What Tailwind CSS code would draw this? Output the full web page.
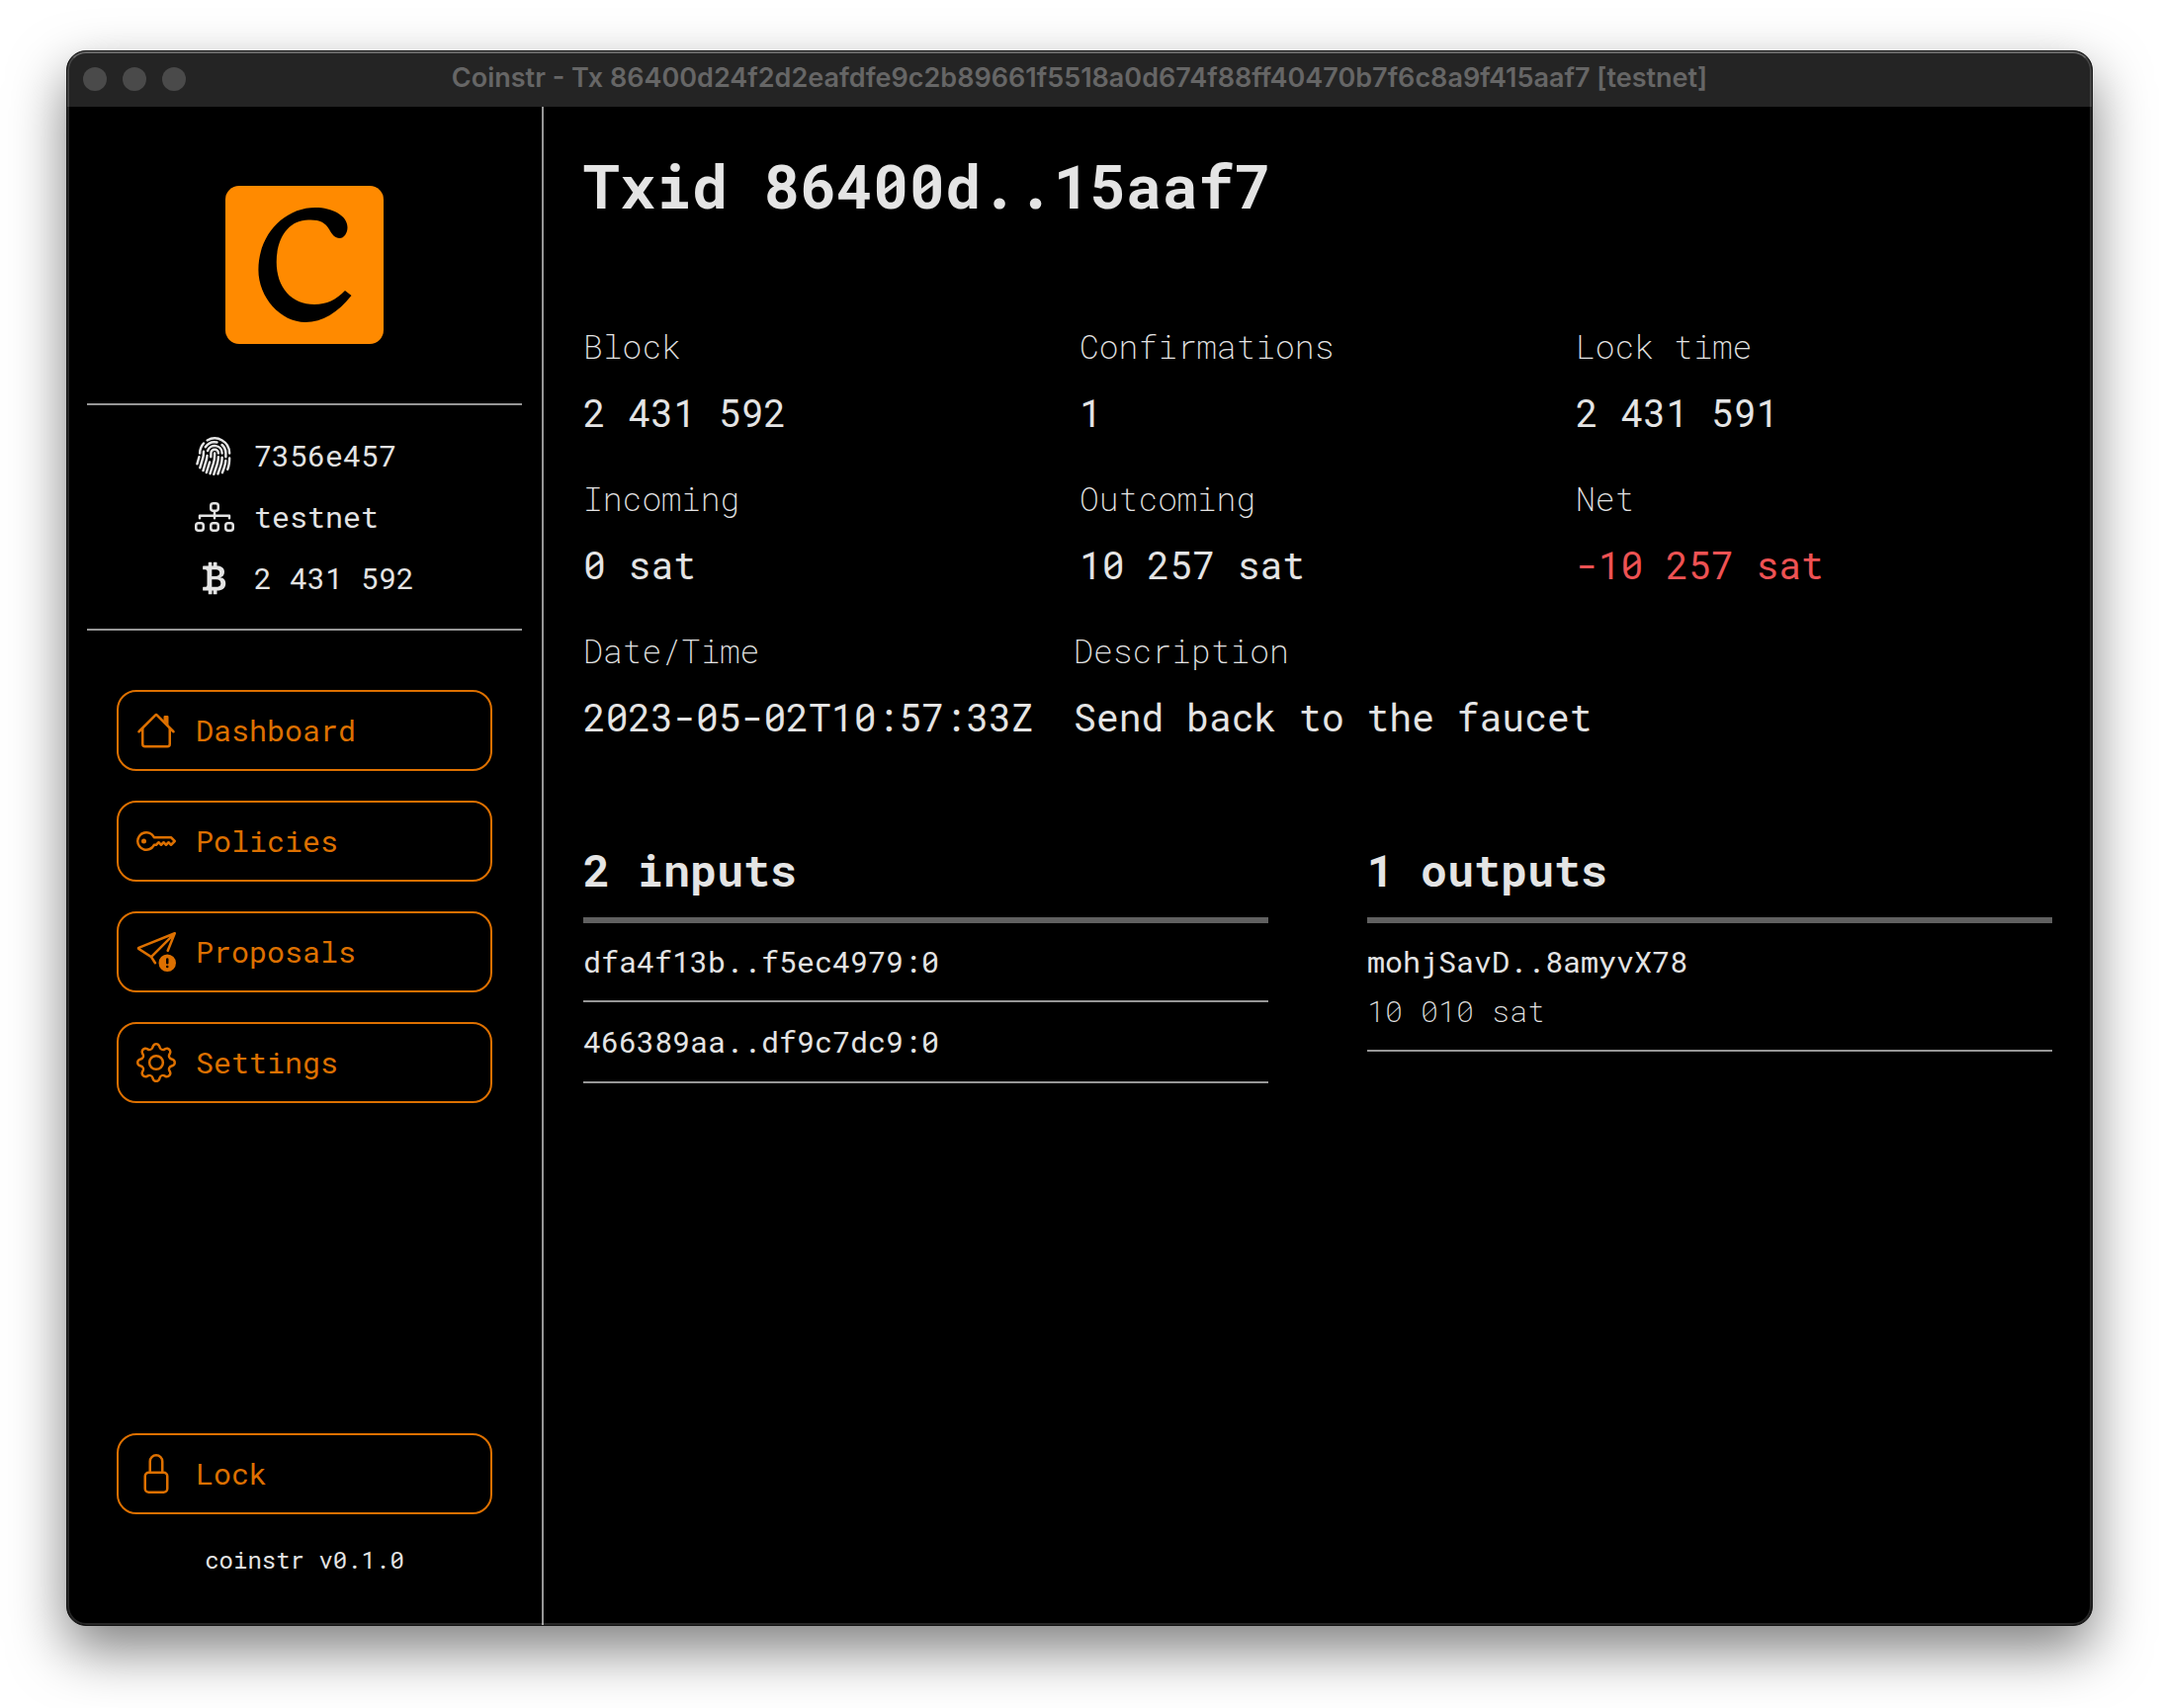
<!DOCTYPE html>
<html lang="en">
<head>
<meta charset="utf-8">
<meta name="viewport" content="width=device-width, initial-scale=1">
<title>Coinstr</title>
<script src="https://cdn.jsdelivr.net/npm/@tailwindcss/browser@4"></script>
</head>
<body class="flex min-h-screen flex-col bg-white px-[67px] pt-[51px] pb-[83px] font-['Roboto_Mono','DejaVu_Sans_Mono',monospace] text-[#e4e4e4]">
<div class="relative flex flex-1 flex-col overflow-hidden rounded-[20px] border border-[#111] bg-black shadow-[0_24px_56px_rgba(0,0,0,0.5)]">
  <div class="pointer-events-none absolute inset-0 z-10 rounded-[19px] border-2 border-white/15 border-t-white/30"></div>

  <header class="relative flex h-14 items-center justify-center bg-[#242424]">
    <div class="absolute left-4 flex gap-4">
      <span class="size-6 rounded-full bg-[#4a4a4a]"></span>
      <span class="size-6 rounded-full bg-[#4a4a4a]"></span>
      <span class="size-6 rounded-full bg-[#4a4a4a]"></span>
    </div>
    <p class="pb-0.5 font-['Inter',sans-serif] text-[27px] leading-8 font-semibold whitespace-nowrap text-[#666666]">Coinstr - Tx 86400d24f2d2eafdfe9c2b89661f5518a0d674f88ff40470b7f6c8a9f415aaf7 [testnet]</p>
  </header>

  <div class="flex flex-1">
    <aside class="flex w-[482px] shrink-0 flex-col border-r-2 border-[#969696] px-5 pt-20">
      <svg class="size-40 self-center" viewBox="0 0 160 160" role="img" aria-label="Coinstr">
        <rect width="160" height="160" rx="14" fill="#ff8a00"/>
        <path fill="#000" d="M91 22C108 22 123.500 30 123.500 42C123.500 48 120 53 115.500 53C111 53 107.500 49 105 44C101 37 95 34 84 34.500C64 34.500 51.700 53 51.700 77C51.700 103 67 120 90 120C103 120 112 115 121 106L127.500 111C114 128 98 138 81 138C56 138 33.400 113 33.400 85C33.400 49 60 22 91 22Z"/>
      </svg>

      <div class="mt-[60px] flex justify-center border-y-2 border-[#969696] py-[30px]">
        <ul class="flex flex-col gap-5 text-[30px] leading-[42px]">
          <li class="flex items-center gap-5">
            <svg class="size-10" viewBox="0 0 16 16" fill="currentColor" aria-hidden="true"><path d="M8.06 6.5a.5.5 0 0 1 .5.5v.776a11.5 11.5 0 0 1-.552 3.519l-1.331 4.14a.5.5 0 0 1-.952-.305l1.33-4.141a10.5 10.5 0 0 0 .504-3.213V7a.5.5 0 0 1 .5-.5Z"/><path d="M6.06 7a2 2 0 1 1 4 0 .5.5 0 1 1-1 0 1 1 0 1 0-2 0v.332c0 .409-.022.816-.066 1.221A.5.5 0 0 1 6 8.447c.04-.37.06-.742.06-1.115V7Zm3.509 1a.5.5 0 0 1 .487.513 11.5 11.5 0 0 1-.587 3.339l-1.266 3.8a.5.5 0 0 1-.949-.317l1.267-3.8a10.5 10.5 0 0 0 .535-3.048A.5.5 0 0 1 9.569 8Zm-3.356 2.115a.5.5 0 0 1 .33.626L5.24 14.939a.5.5 0 1 1-.955-.296l1.303-4.199a.5.5 0 0 1 .625-.329Z"/><path d="M4.759 5.833A3.501 3.501 0 0 1 11.559 7a.5.5 0 0 1-1 0 2.5 2.5 0 0 0-4.857-.833.5.5 0 1 1-.943-.334Zm.3 1.67a.5.5 0 0 1 .449.546 10.7 10.7 0 0 1-.4 2.031l-1.222 4.072a.5.5 0 1 1-.958-.287L4.15 9.793a9.7 9.7 0 0 0 .363-1.842.5.5 0 0 1 .546-.449Zm6 .647a.5.5 0 0 1 .5.5c0 1.28-.213 2.552-.632 3.762l-1.09 3.145a.5.5 0 0 1-.944-.327l1.089-3.145c.382-1.105.578-2.266.578-3.435a.5.5 0 0 1 .5-.5Z"/><path d="M3.902 4.222a5 5 0 0 1 5.202-2.113.5.5 0 0 1-.208.979 4 4 0 0 0-4.163 1.69.5.5 0 0 1-.831-.556Zm6.72-.955a.5.5 0 0 1 .705-.052A4.99 4.99 0 0 1 13.059 7v1.5a.5.5 0 1 1-1 0V7a3.99 3.99 0 0 0-1.386-3.028.5.5 0 0 1-.051-.705ZM3.68 5.842a.5.5 0 0 1 .422.568c-.029.192-.044.39-.044.59 0 .71-.1 1.417-.298 2.1l-1.14 3.923a.5.5 0 1 1-.96-.279L2.8 8.821A6.5 6.5 0 0 0 3.058 7c0-.25.019-.496.054-.736a.5.5 0 0 1 .568-.422Zm8.882 3.66a.5.5 0 0 1 .456.54c-.084 1-.298 1.986-.64 2.934l-.744 2.068a.5.5 0 0 1-.941-.338l.745-2.07a10.51 10.51 0 0 0 .584-2.678.5.5 0 0 1 .54-.456Z"/><path d="M4.81 1.37A6.5 6.5 0 0 1 14.56 7a.5.5 0 1 1-1 0 5.5 5.5 0 0 0-8.25-4.765.5.5 0 0 1-.5-.865Zm-.89 1.257a.5.5 0 0 1 .04.706A5.478 5.478 0 0 0 2.56 7a.5.5 0 0 1-1 0c0-1.664.626-3.184 1.655-4.333a.5.5 0 0 1 .706-.04ZM1.915 8.02a.5.5 0 0 1 .346.616l-.779 2.767a.5.5 0 1 1-.962-.27l.778-2.767a.5.5 0 0 1 .617-.346Zm12.15.481a.5.5 0 0 1 .49.51c-.03 1.499-.161 3.025-.727 4.533l-.07.187a.5.5 0 0 1-.936-.351l.07-.187c.506-1.35.634-2.74.663-4.202a.5.5 0 0 1 .51-.49Z"/></svg>
            <span>7356e457</span>
          </li>
          <li class="flex items-center gap-5">
            <svg class="size-10" viewBox="0 0 16 16" fill="currentColor" aria-hidden="true"><path fill-rule="evenodd" d="M6 3.5A1.5 1.5 0 0 1 7.5 2h1A1.5 1.5 0 0 1 10 3.5v1A1.5 1.5 0 0 1 8.5 6v1H14a.5.5 0 0 1 .5.5v1a.5.5 0 0 1-1 0V8h-5v.5a.5.5 0 0 1-1 0V8h-5v.5a.5.5 0 0 1-1 0v-1A.5.5 0 0 1 2 7h5.500V6A1.5 1.5 0 0 1 6 4.5v-1zM8.500 5a.5.5 0 0 0 .5-.5v-1a.5.5 0 0 0-.5-.5h-1a.5.5 0 0 0-.5.5v1a.5.5 0 0 0 .5.5h1zM0 11.500A1.5 1.5 0 0 1 1.500 10h1A1.5 1.5 0 0 1 4 11.500v1A1.5 1.5 0 0 1 2.500 14h-1A1.5 1.5 0 0 1 0 12.500v-1zm1.500-.5a.5.5 0 0 0-.5.5v1a.5.5 0 0 0 .5.5h1a.5.5 0 0 0 .5-.5v-1a.5.5 0 0 0-.5-.5h-1zm4.500.5A1.5 1.5 0 0 1 7.500 10h1a1.5 1.5 0 0 1 1.500 1.500v1A1.5 1.5 0 0 1 8.500 14h-1A1.5 1.5 0 0 1 6 12.500v-1zm1.500-.5a.5.5 0 0 0-.5.5v1a.5.5 0 0 0 .5.5h1a.5.5 0 0 0 .5-.5v-1a.5.5 0 0 0-.5-.5h-1zm4.500.5a1.5 1.5 0 0 1 1.500-1.500h1a1.5 1.5 0 0 1 1.500 1.500v1a1.5 1.5 0 0 1-1.500 1.500h-1a1.5 1.5 0 0 1-1.500-1.500v-1zm1.500-.5a.5.5 0 0 0-.5.5v1a.5.5 0 0 0 .5.5h1a.5.5 0 0 0 .5-.5v-1a.5.5 0 0 0-.5-.5h-1z"/></svg>
            <span>testnet</span>
          </li>
          <li class="flex items-center gap-5">
            <svg class="size-10" viewBox="0 0 16 16" fill="currentColor" aria-hidden="true"><path d="M5.5 13v1.25c0 .138.112.25.25.25h1a.25.25 0 0 0 .25-.25V13h.5v1.25c0 .138.112.25.25.25h1a.25.25 0 0 0 .25-.25V13h.084c1.992 0 3.416-1.033 3.416-2.82 0-1.502-1.007-2.323-2.186-2.44v-.088c.97-.242 1.683-.974 1.683-2.19C11.997 3.93 10.847 3 9.092 3H9V1.75a.25.25 0 0 0-.25-.25h-1a.25.25 0 0 0-.25.25V3h-.573V1.75a.25.25 0 0 0-.25-.25H5.75a.25.25 0 0 0-.25.25V3l-1.998.011a.25.25 0 0 0-.25.25v.989c0 .137.11.25.248.25l.755-.005a.75.75 0 0 1 .745.75v5.505a.75.75 0 0 1-.75.75l-.748.011a.25.25 0 0 0-.25.25v1c0 .138.112.25.25.25L5.5 13zm1.427-8.513h1.719c.906 0 1.438.498 1.438 1.312 0 .871-.575 1.362-1.877 1.362h-1.28V4.487zm0 4.051h1.84c1.137 0 1.756.58 1.756 1.524 0 .953-.626 1.45-2.158 1.45H6.927V8.539z"/></svg>
            <span>2 431 592</span>
          </li>
        </ul>
      </div>

      <nav class="mx-[30px] mt-[60px] flex flex-col gap-[30px]">
        <button type="button" class="flex h-[82px] items-center gap-5 rounded-[20px] border-2 border-[#dd7000] px-[18px] text-[30px] leading-[42px] text-[#dd7000]">
          <svg class="size-10" viewBox="0 0 16 16" fill="currentColor" aria-hidden="true"><path fill-rule="evenodd" d="M2 13.500V7h1v6.500a.5.5 0 0 0 .5.5h9a.5.5 0 0 0 .5-.5V7h1v6.500a1.500 1.500 0 0 1-1.500 1.500h-9A1.500 1.500 0 0 1 2 13.500zm11-11V6l-2-2V2.500a.5.5 0 0 1 .5-.5h1a.5.5 0 0 1 .5.5z"/><path fill-rule="evenodd" d="M7.293 1.500a1 1 0 0 1 1.414 0l6.647 6.646a.5.5 0 0 1-.708.708L8 2.207 1.354 8.854a.5.5 0 1 1-.708-.708L7.293 1.500z"/></svg>
          Dashboard
        </button>
        <button type="button" class="flex h-[82px] items-center gap-5 rounded-[20px] border-2 border-[#dd7000] px-[18px] text-[30px] leading-[42px] text-[#dd7000]">
          <svg class="size-10" viewBox="0 0 16 16" fill="currentColor" aria-hidden="true"><path d="M0 8a4 4 0 0 1 7.465-2H14a.5.5 0 0 1 .354.146l1.5 1.5a.5.5 0 0 1 0 .708l-1.5 1.5a.5.5 0 0 1-.708 0L13 9.207l-.646.647a.5.5 0 0 1-.708 0L11 9.207l-.646.647a.5.5 0 0 1-.708 0L9 9.207l-.646.647A.5.5 0 0 1 8 10h-.535A4 4 0 0 1 0 8zm4-3a3 3 0 1 0 2.712 4.285A.5.5 0 0 1 7.163 9h.63l.853-.854a.5.5 0 0 1 .708 0l.646.647.646-.647a.5.5 0 0 1 .708 0l.646.647.646-.647a.5.5 0 0 1 .708 0l.646.647.793-.793-1-1h-6.63a.5.5 0 0 1-.451-.285A3 3 0 0 0 4 5z"/><path d="M4 8a1 1 0 1 1-2 0 1 1 0 0 1 2 0z"/></svg>
          Policies
        </button>
        <button type="button" class="flex h-[82px] items-center gap-5 rounded-[20px] border-2 border-[#dd7000] px-[18px] text-[30px] leading-[42px] text-[#dd7000]">
          <svg class="size-10" viewBox="0 0 16 16" fill="currentColor" aria-hidden="true"><path d="M15.964.686a.5.5 0 0 0-.65-.65L.767 5.855a.75.75 0 0 0-.124 1.329l4.995 3.178 1.531 2.406a.5.5 0 0 0 .844-.536L6.637 10.07l7.494-7.494-1.895 4.738a.5.5 0 1 0 .928.372l2.8-7Zm-2.54 1.183L5.93 9.363 1.591 6.602l11.833-4.733Z"/><path d="M12.5 16a3.5 3.5 0 1 0 0-7 3.5 3.5 0 0 0 0 7Zm.5-5v1.5a.5.5 0 0 1-1 0V11a.5.5 0 0 1 1 0Zm0 3a.5.5 0 1 1-1 0 .5.5 0 0 1 1 0Z"/></svg>
          Proposals
        </button>
        <button type="button" class="flex h-[82px] items-center gap-5 rounded-[20px] border-2 border-[#dd7000] px-[18px] text-[30px] leading-[42px] text-[#dd7000]">
          <svg class="size-10" viewBox="0 0 16 16" fill="currentColor" aria-hidden="true"><path d="M8 4.754a3.246 3.246 0 1 0 0 6.492 3.246 3.246 0 0 0 0-6.492zM5.754 8a2.246 2.246 0 1 1 4.492 0 2.246 2.246 0 0 1-4.492 0z"/><path d="M9.796 1.343c-.527-1.79-3.065-1.79-3.592 0l-.094.319a.873.873 0 0 1-1.255.52l-.292-.16c-1.64-.892-3.433.902-2.54 2.541l.159.292a.873.873 0 0 1-.52 1.255l-.319.094c-1.79.527-1.79 3.065 0 3.592l.319.094a.873.873 0 0 1 .52 1.255l-.16.292c-.892 1.64.901 3.434 2.541 2.54l.292-.159a.873.873 0 0 1 1.255.52l.094.319c.527 1.79 3.065 1.79 3.592 0l.094-.319a.873.873 0 0 1 1.255-.52l.292.16c1.64.893 3.434-.902 2.54-2.541l-.159-.292a.873.873 0 0 1 .52-1.255l.319-.094c1.79-.527 1.79-3.065 0-3.592l-.319-.094a.873.873 0 0 1-.52-1.255l.16-.292c.893-1.64-.902-3.433-2.541-2.54l-.292.159a.873.873 0 0 1-1.255-.52l-.094-.319zm-2.633.283c.246-.835 1.428-.835 1.674 0l.094.319a1.873 1.873 0 0 0 2.693 1.115l.291-.16c.764-.415 1.6.42 1.184 1.185l-.159.292a1.873 1.873 0 0 0 1.116 2.692l.318.094c.835.246.835 1.428 0 1.674l-.319.094a1.873 1.873 0 0 0-1.115 2.693l.16.291c.415.764-.42 1.6-1.185 1.184l-.291-.159a1.873 1.873 0 0 0-2.693 1.116l-.094.318c-.246.835-1.428.835-1.674 0l-.094-.319a1.873 1.873 0 0 0-2.692-1.115l-.292.16c-.764.415-1.6-.42-1.184-1.185l.159-.291A1.873 1.873 0 0 0 1.945 8.93l-.319-.094c-.835-.246-.835-1.428 0-1.674l.319-.094A1.873 1.873 0 0 0 3.06 4.377l-.16-.292c-.415-.764.42-1.6 1.185-1.184l.292.159a1.873 1.873 0 0 0 2.692-1.115l.094-.319z"/></svg>
          Settings
        </button>
      </nav>

      <div class="mt-auto flex flex-col pb-[50px]">
        <button type="button" class="mx-[30px] flex h-[82px] items-center gap-5 rounded-[20px] border-2 border-[#dd7000] px-[18px] text-[30px] leading-[42px] text-[#dd7000]">
          <svg class="size-10" viewBox="0 0 16 16" fill="currentColor" aria-hidden="true"><path d="M8 1a2 2 0 0 1 2 2v4H6V3a2 2 0 0 1 2-2zm3 6V3a3 3 0 0 0-6 0v4a2 2 0 0 0-2 2v5a2 2 0 0 0 2 2h6a2 2 0 0 0 2-2V9a2 2 0 0 0-2-2zM5 8h6a1 1 0 0 1 1 1v5a1 1 0 0 1-1 1H5a1 1 0 0 1-1-1V9a1 1 0 0 1 1-1z"/></svg>
          Lock
        </button>
        <p class="mt-[30px] text-center text-2xl leading-8">coinstr v0.1.0</p>
      </div>
    </aside>

    <main class="min-w-0 flex-1 px-10 pt-[39px] pb-10">
      <h1 class="text-[61px] leading-[81px] font-bold">Txid 86400d..15aaf7</h1>

      <dl class="mt-[100px] flex flex-col gap-10 text-[38px] leading-[50px]">
        <div class="grid grid-cols-3 gap-5">
          <div class="flex flex-col gap-5"><dt class="text-[33px] leading-[44px] font-extralight">Block</dt><dd>2 431 592</dd></div>
          <div class="flex flex-col gap-5"><dt class="text-[33px] leading-[44px] font-extralight">Confirmations</dt><dd>1</dd></div>
          <div class="flex flex-col gap-5"><dt class="text-[33px] leading-[44px] font-extralight">Lock time</dt><dd>2 431 591</dd></div>
        </div>
        <div class="grid grid-cols-3 gap-5">
          <div class="flex flex-col gap-5"><dt class="text-[33px] leading-[44px] font-extralight">Incoming</dt><dd>0 sat</dd></div>
          <div class="flex flex-col gap-5"><dt class="text-[33px] leading-[44px] font-extralight">Outcoming</dt><dd>10 257 sat</dd></div>
          <div class="flex flex-col gap-5"><dt class="text-[33px] leading-[44px] font-extralight">Net</dt><dd class="text-[#ee5253]">-10 257 sat</dd></div>
        </div>
        <div class="flex gap-10">
          <div class="flex flex-col gap-5"><dt class="text-[33px] leading-[44px] font-extralight">Date/Time</dt><dd>2023-05-02T10:57:33Z</dd></div>
          <div class="flex flex-col gap-5"><dt class="text-[33px] leading-[44px] font-extralight">Description</dt><dd>Send back to the faucet</dd></div>
        </div>
      </dl>

      <div class="mt-[100px] grid grid-cols-2 items-start gap-[100px] text-[30px] leading-10">
        <section>
          <h2 class="border-b-6 border-[#606060] pb-[18px] text-[45px] leading-[60px] font-bold">2 inputs</h2>
          <ul>
            <li class="border-b-2 border-[#969696] py-[19px]">dfa4f13b..f5ec4979:0</li>
            <li class="border-b-2 border-[#969696] py-5">466389aa..df9c7dc9:0</li>
          </ul>
        </section>
        <section>
          <h2 class="border-b-6 border-[#606060] pb-[18px] text-[45px] leading-[60px] font-bold">1 outputs</h2>
          <ul>
            <li class="flex flex-col gap-2.5 border-b-2 border-[#969696] py-[19px]">
              <span>mohjSavD..8amyvX78</span>
              <span class="font-extralight">10 010 sat</span>
            </li>
          </ul>
        </section>
      </div>
    </main>
  </div>
</div>
</body>
</html>
